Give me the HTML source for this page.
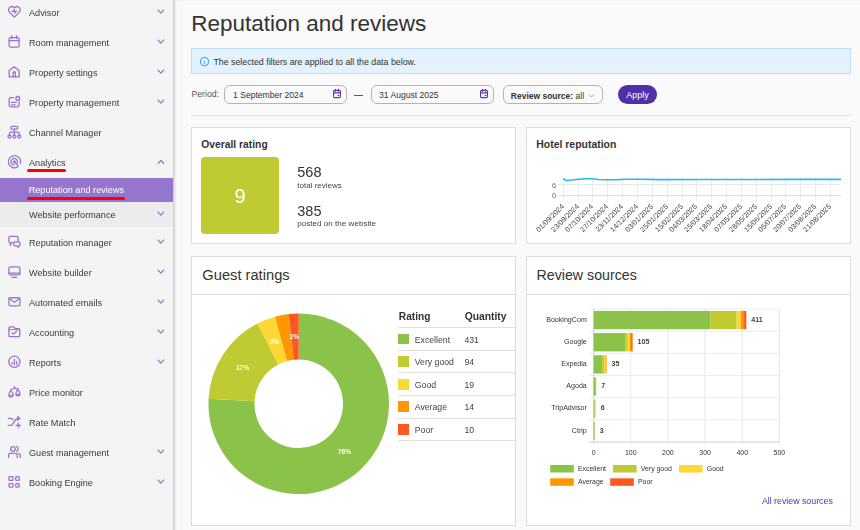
<!DOCTYPE html>
<html><head><meta charset="utf-8"><style>
html,body{margin:0;padding:0;}
body{width:860px;height:530px;overflow:hidden;position:relative;background:#fafafa;font-family:"Liberation Sans",sans-serif;}
.t{position:absolute;white-space:nowrap;line-height:1;}
.b{position:absolute;}
.ic{position:absolute;overflow:visible;}
</style></head><body>
<div style="position:absolute;left:0;top:0;width:177px;height:530px;will-change:transform;">
<div class="b" style="left:0px;top:0px;width:173px;height:530px;background:#f4f4f4;"></div>
<div class="b" style="left:173px;top:0px;width:4px;height:530px;background:linear-gradient(to right,rgba(0,0,0,0.2),rgba(0,0,0,0.08) 45%,rgba(0,0,0,0.0));"></div>
<svg class="ic" style="left:0px;top:0px;width:28px;height:30px" viewBox="0 0 28 30" fill="none" stroke="#9575cd" stroke-width="1.3" stroke-linecap="round" stroke-linejoin="round"><path d="M14.4 17.1 L9.6 12.4 C7.9 10.6 8.3 7.7 10.5 6.8 C12.1 6.1 13.6 6.8 14.4 8 C15.2 6.8 16.7 6.1 18.3 6.8 C20.5 7.7 20.9 10.6 19.2 12.4 Z"/><path d="M11.9 11.3 H13.4 L14.1 9.6 L14.9 13.2 L15.6 11.3 H16.8" stroke-width="1.2"/></svg>
<div class="t" style="left:29.00px;top:9.00px;font-size:9.15px;color:#3a3a3a;">Advisor</div>
<svg class="ic" style="left:0px;top:0px;width:173px;height:30px" viewBox="0 0 173 30" fill="none" stroke="#9575cd" stroke-width="1.3" stroke-linecap="round" stroke-linejoin="round"><path d="M158.1 10.1 L160.9 13.1 L163.6 10.1"/></svg>
<svg class="ic" style="left:0px;top:30px;width:28px;height:30px" viewBox="0 0 28 30" fill="none" stroke="#9575cd" stroke-width="1.3" stroke-linecap="round" stroke-linejoin="round"><rect x="9.15" y="7.55" width="10" height="9.6" rx="1.5"/><path d="M11.9 5.6V8.6M16.5 5.6V8.6M9.15 10.6H19.15"/></svg>
<div class="t" style="left:29.00px;top:39.00px;font-size:9.15px;color:#3a3a3a;">Room management</div>
<svg class="ic" style="left:0px;top:30px;width:173px;height:30px" viewBox="0 0 173 30" fill="none" stroke="#9575cd" stroke-width="1.3" stroke-linecap="round" stroke-linejoin="round"><path d="M158.1 10.1 L160.9 13.1 L163.6 10.1"/></svg>
<svg class="ic" style="left:0px;top:60px;width:28px;height:30px" viewBox="0 0 28 30" fill="none" stroke="#9575cd" stroke-width="1.3" stroke-linecap="round" stroke-linejoin="round"><path d="M9.15 16.85 V10.6 L14.15 6.65 L19.15 10.6 V16.85 Z"/><path d="M13.15 16.85 V12.6 Q13.15 12 13.75 12 H14.75 Q15.35 12 15.35 12.6 V16.85"/></svg>
<div class="t" style="left:29.00px;top:69.00px;font-size:9.15px;color:#3a3a3a;">Property settings</div>
<svg class="ic" style="left:0px;top:60px;width:173px;height:30px" viewBox="0 0 173 30" fill="none" stroke="#9575cd" stroke-width="1.3" stroke-linecap="round" stroke-linejoin="round"><path d="M158.1 10.1 L160.9 13.1 L163.6 10.1"/></svg>
<svg class="ic" style="left:0px;top:90px;width:28px;height:30px" viewBox="0 0 28 30" fill="none" stroke="#9575cd" stroke-width="1.3" stroke-linecap="round" stroke-linejoin="round"><path d="M13.5 7.55 H10.65 Q9.15 7.55 9.15 9.05 V15.35 Q9.15 16.85 10.65 16.85 H17.55 Q19.05 16.85 19.05 15.35 V11.8"/><circle cx="17.8" cy="8.4" r="1.9"/><path d="M11.5 12.4 H16.3M11.5 14.8 H15.1"/></svg>
<div class="t" style="left:29.00px;top:99.00px;font-size:9.15px;color:#3a3a3a;">Property management</div>
<svg class="ic" style="left:0px;top:90px;width:173px;height:30px" viewBox="0 0 173 30" fill="none" stroke="#9575cd" stroke-width="1.3" stroke-linecap="round" stroke-linejoin="round"><path d="M158.1 10.1 L160.9 13.1 L163.6 10.1"/></svg>
<svg class="ic" style="left:0px;top:120px;width:28px;height:30px" viewBox="0 0 28 30" fill="none" stroke="#9575cd" stroke-width="1.3" stroke-linecap="round" stroke-linejoin="round"><rect x="10.85" y="6.45" width="6.9" height="2.6" rx="1"/><path d="M14.3 9.05 V14.9 M9.5 15 V13.5 Q9.5 12.2 10.8 12.2 H17.9 Q19.2 12.2 19.2 13.5 V15"/><circle cx="9.5" cy="16.5" r="1.5"/><circle cx="14.35" cy="16.5" r="1.5"/><circle cx="19.2" cy="16.5" r="1.5"/></svg>
<div class="t" style="left:29.00px;top:129.00px;font-size:9.15px;color:#3a3a3a;">Channel Manager</div>
<svg class="ic" style="left:0px;top:150px;width:28px;height:30px" viewBox="0 0 28 30" fill="none" stroke="#9575cd" stroke-width="1.3" stroke-linecap="round" stroke-linejoin="round"><path d="M17.6 17 A6.1 6.1 0 1 1 20.3 13.6"/><path d="M16.9 13.3 A3.2 3.2 0 1 0 14.3 14.9"/><circle cx="14.4" cy="11.7" r="0.9"/><path d="M14.9 12.3 L18.2 16.2"/></svg>
<div class="t" style="left:29.00px;top:159.00px;font-size:9.15px;color:#3a3a3a;">Analytics</div>
<svg class="ic" style="left:0px;top:150px;width:173px;height:30px" viewBox="0 0 173 30" fill="none" stroke="#9575cd" stroke-width="1.3" stroke-linecap="round" stroke-linejoin="round"><path d="M158.3 13.3 L160.9 10.5 L163.6 13.3"/></svg>
<svg class="ic" style="left:0px;top:230px;width:28px;height:30px" viewBox="0 0 28 30" fill="none" stroke="#9575cd" stroke-width="1.3" stroke-linecap="round" stroke-linejoin="round"><path d="M12.6 12.65 H11.3 L10.5 15.5 L9.9 12.65 Q8.95 12.65 8.95 11.6 V7.5 Q8.95 6.45 10 6.45 H17 Q18.05 6.45 18.05 7.5 V11.2"/><path d="M14.9 11.85 H18.9 Q19.95 11.85 19.95 12.9 V14.8 Q19.95 15.85 18.9 15.85 L18.3 17.4 L16.9 15.85 H14.9 Q13.85 15.85 13.85 14.8 V12.9 Q13.85 11.85 14.9 11.85Z"/></svg>
<div class="t" style="left:29.00px;top:239.00px;font-size:9.15px;color:#3a3a3a;">Reputation manager</div>
<svg class="ic" style="left:0px;top:230px;width:173px;height:30px" viewBox="0 0 173 30" fill="none" stroke="#9575cd" stroke-width="1.3" stroke-linecap="round" stroke-linejoin="round"><path d="M158.1 10.1 L160.9 13.1 L163.6 10.1"/></svg>
<svg class="ic" style="left:0px;top:260px;width:28px;height:30px" viewBox="0 0 28 30" fill="none" stroke="#9575cd" stroke-width="1.3" stroke-linecap="round" stroke-linejoin="round"><rect x="8.95" y="6.85" width="11" height="8.1" rx="1.5"/><path d="M8.95 13.1 H19.95 M11.9 17.3 H16.6"/></svg>
<div class="t" style="left:29.00px;top:269.00px;font-size:9.15px;color:#3a3a3a;">Website builder</div>
<svg class="ic" style="left:0px;top:260px;width:173px;height:30px" viewBox="0 0 173 30" fill="none" stroke="#9575cd" stroke-width="1.3" stroke-linecap="round" stroke-linejoin="round"><path d="M158.1 10.1 L160.9 13.1 L163.6 10.1"/></svg>
<svg class="ic" style="left:0px;top:290px;width:28px;height:30px" viewBox="0 0 28 30" fill="none" stroke="#9575cd" stroke-width="1.3" stroke-linecap="round" stroke-linejoin="round"><rect x="8.95" y="7.75" width="11" height="8.1" rx="1.3"/><path d="M9.2 8.4 L14.45 12.3 L19.7 8.4"/></svg>
<div class="t" style="left:29.00px;top:299.00px;font-size:9.15px;color:#3a3a3a;">Automated emails</div>
<svg class="ic" style="left:0px;top:290px;width:173px;height:30px" viewBox="0 0 173 30" fill="none" stroke="#9575cd" stroke-width="1.3" stroke-linecap="round" stroke-linejoin="round"><path d="M158.1 10.1 L160.9 13.1 L163.6 10.1"/></svg>
<svg class="ic" style="left:0px;top:320px;width:28px;height:30px" viewBox="0 0 28 30" fill="none" stroke="#9575cd" stroke-width="1.3" stroke-linecap="round" stroke-linejoin="round"><path d="M10.2 6.85 H13.9 L15.1 8.6 H18.5 Q19.75 8.6 19.75 9.85 V15.4 Q19.75 16.65 18.5 16.65 H10.2 Q8.95 16.65 8.95 15.4 V8.1 Q8.95 6.85 10.2 6.85Z"/><path d="M8.95 9.6 H19.75" stroke-width="1.0"/><path d="M12.1 12.9 L13.6 14.1 L16.6 11.2"/></svg>
<div class="t" style="left:29.00px;top:329.00px;font-size:9.15px;color:#3a3a3a;">Accounting</div>
<svg class="ic" style="left:0px;top:320px;width:173px;height:30px" viewBox="0 0 173 30" fill="none" stroke="#9575cd" stroke-width="1.3" stroke-linecap="round" stroke-linejoin="round"><path d="M158.1 10.1 L160.9 13.1 L163.6 10.1"/></svg>
<svg class="ic" style="left:0px;top:350px;width:28px;height:30px" viewBox="0 0 28 30" fill="none" stroke="#9575cd" stroke-width="1.3" stroke-linecap="round" stroke-linejoin="round"><circle cx="14.4" cy="11.8" r="5.6"/><path d="M12.1 12.7 V14.2 M14.4 9.2 V14.4 M16.6 11.4 V14.2"/></svg>
<div class="t" style="left:29.00px;top:359.00px;font-size:9.15px;color:#3a3a3a;">Reports</div>
<svg class="ic" style="left:0px;top:350px;width:173px;height:30px" viewBox="0 0 173 30" fill="none" stroke="#9575cd" stroke-width="1.3" stroke-linecap="round" stroke-linejoin="round"><path d="M158.1 10.1 L160.9 13.1 L163.6 10.1"/></svg>
<svg class="ic" style="left:0px;top:380px;width:28px;height:30px" viewBox="0 0 28 30" fill="none" stroke="#9575cd" stroke-width="1.3" stroke-linecap="round" stroke-linejoin="round"><path d="M14.4 6.4 V7.9 M10.6 9.8 Q14.4 7.6 18 8.8"/><path d="M10.9 10.7 C9.5 12.2 8.8 13.5 8.8 14.9 A2.15 2.15 0 0 0 13.1 14.9 C13.1 13.5 12.3 12.2 10.9 10.7Z M9 15.5 H12.9" stroke-width="1.2"/><path d="M17.95 9.5 C16.6 11 15.8 12.3 15.8 13.7 A2.15 2.15 0 0 0 20.1 13.7 C20.1 12.3 19.3 11 17.95 9.5Z M16 14.4 H19.9" stroke-width="1.2"/></svg>
<div class="t" style="left:29.00px;top:389.00px;font-size:9.15px;color:#3a3a3a;">Price monitor</div>
<svg class="ic" style="left:0px;top:410px;width:28px;height:30px" viewBox="0 0 28 30" fill="none" stroke="#9575cd" stroke-width="1.3" stroke-linecap="round" stroke-linejoin="round"><path d="M8.4 8.4 H10.9 Q12.2 8.4 12.9 9.6 M8.4 15.4 H11.6 L16.1 9.2 Q16.8 8.3 18 8.3 H19.5 M17.6 6.5 L19.7 8.3 L17.6 10.2 M18.3 13.2 V17.6 M16.1 15.4 H20.5"/></svg>
<div class="t" style="left:29.00px;top:419.00px;font-size:9.15px;color:#3a3a3a;">Rate Match</div>
<svg class="ic" style="left:0px;top:440px;width:28px;height:30px" viewBox="0 0 28 30" fill="none" stroke="#9575cd" stroke-width="1.3" stroke-linecap="round" stroke-linejoin="round"><circle cx="12.9" cy="9" r="2.3"/><path d="M16.6 6.6 A2.6 2.6 0 0 1 16.6 11.4 M8.6 17.4 V14.9 Q8.6 13.3 10.3 13.3 H15.6 Q17.2 13.3 17.2 14.9 V17.4 M18.6 13.4 Q20.3 13.9 20.3 15.6 V17.4"/></svg>
<div class="t" style="left:29.00px;top:449.00px;font-size:9.15px;color:#3a3a3a;">Guest management</div>
<svg class="ic" style="left:0px;top:440px;width:173px;height:30px" viewBox="0 0 173 30" fill="none" stroke="#9575cd" stroke-width="1.3" stroke-linecap="round" stroke-linejoin="round"><path d="M158.1 10.1 L160.9 13.1 L163.6 10.1"/></svg>
<svg class="ic" style="left:0px;top:470px;width:28px;height:30px" viewBox="0 0 28 30" fill="none" stroke="#9575cd" stroke-width="1.3" stroke-linecap="round" stroke-linejoin="round"><rect x="8.95" y="6.65" width="4.1" height="3.8" rx="0.8"/><rect x="15.75" y="6.65" width="3.45" height="3.8" rx="0.8"/><rect x="8.95" y="13.65" width="4.1" height="3.4" rx="0.8"/><rect x="15.75" y="13.65" width="3.45" height="3.4" rx="0.8"/></svg>
<div class="t" style="left:29.00px;top:479.00px;font-size:9.15px;color:#3a3a3a;">Booking Engine</div>
<svg class="ic" style="left:0px;top:470px;width:173px;height:30px" viewBox="0 0 173 30" fill="none" stroke="#9575cd" stroke-width="1.3" stroke-linecap="round" stroke-linejoin="round"><path d="M158.1 10.1 L160.9 13.1 L163.6 10.1"/></svg>
<div class="b" style="left:0px;top:178px;width:173px;height:24px;background:#9575cd;"></div>
<div class="t" style="left:28.70px;top:186.00px;font-size:9.15px;color:#fff;">Reputation and reviews</div>
<div class="b" style="left:0px;top:202px;width:173px;height:25px;background:#ececec;"></div>
<div class="t" style="left:29.00px;top:211.00px;font-size:9.15px;color:#3a3a3a;">Website performance</div>
<svg class="ic" style="left:0px;top:202px;width:173px;height:30px" viewBox="0 0 173 30" fill="none" stroke="#9575cd" stroke-width="1.3" stroke-linecap="round" stroke-linejoin="round"><path d="M158.1 10.1 L160.9 13.1 L163.6 10.1"/></svg>
<div class="b" style="left:27px;top:169px;width:39px;height:3px;background:#f00;border-radius:2px;"></div>
<div class="b" style="left:27px;top:197px;width:98px;height:3px;background:#f00;border-radius:2px;"></div>
</div>
<div class="b" style="left:177px;top:0px;width:683px;height:1px;background:#f3f3f3;"></div>
<div class="b" style="left:177px;top:1px;width:683px;height:1px;background:#f8f8f8;"></div>
<div class="t" style="left:191.20px;top:13.00px;font-size:22.5px;color:#333;">Reputation and reviews</div>
<div class="b" style="left:191px;top:48px;width:660px;height:26px;background:#e3f2fd;border:1px solid #bbdefb;box-sizing:border-box;"></div>
<svg class="ic" style="left:199px;top:56.2px;width:11px;height:11px" viewBox="0 0 11 11" fill="none" stroke="#42a5f5" stroke-width="1.1"><circle cx="5.5" cy="5.6" r="4.1"/><path d="M5.5 5.2v2.4" stroke-width="1.2"/><path d="M5.5 3.6v.2" stroke-width="0.9" opacity="0.5"/></svg>
<div class="t" style="left:213.40px;top:58.00px;font-size:8.8px;color:#333;">The selected filters are applied to all the data below.</div>
<div class="t" style="left:191.60px;top:90.00px;font-size:8.6px;color:#555;">Period:</div>
<div class="b" style="left:224px;top:85px;width:123px;height:19px;background:transparent;border:1px solid #b4b4b4;border-radius:6px;box-sizing:border-box;"></div>
<div class="t" style="left:232.80px;top:90.00px;font-size:9.4px;color:#333;transform:scaleX(0.915);transform-origin:0 0;">1 September 2024</div>
<svg class="ic" style="left:333px;top:88px;width:10px;height:12px" viewBox="0 0 10 12" fill="none" stroke="#5e35b1" stroke-width="1.1" stroke-linecap="round" stroke-linejoin="round"><rect x="0.55" y="2.35" width="6.9" height="7.3" rx="1.2"/><path d="M2.5 1.4V3.2M5.6 1.4V3.2M0.8 4.9H7.2"/><path d="M5.2 7.3h.6" stroke-width="1.3"/></svg>
<div class="b" style="left:354px;top:94.5px;width:9px;height:1.2000000000000028px;background:#5a5a5a;"></div>
<div class="b" style="left:371px;top:85px;width:123px;height:19px;background:transparent;border:1px solid #b4b4b4;border-radius:6px;box-sizing:border-box;"></div>
<div class="t" style="left:379.00px;top:90.00px;font-size:9.4px;color:#333;transform:scaleX(0.915);transform-origin:0 0;">31 August 2025</div>
<svg class="ic" style="left:480px;top:88px;width:10px;height:12px" viewBox="0 0 10 12" fill="none" stroke="#5e35b1" stroke-width="1.1" stroke-linecap="round" stroke-linejoin="round"><rect x="0.55" y="2.35" width="6.9" height="7.3" rx="1.2"/><path d="M2.5 1.4V3.2M5.6 1.4V3.2M0.8 4.9H7.2"/><path d="M5.2 7.3h.6" stroke-width="1.3"/></svg>
<div class="b" style="left:503px;top:85px;width:100px;height:19px;background:transparent;border:1px solid #b4b4b4;border-radius:6px;box-sizing:border-box;"></div>
<div class="t" style="left:510.80px;top:92.00px;font-size:8.5px;color:#333;"><b>Review source:</b> all</div>
<svg class="ic" style="left:587.5px;top:93.5px;width:7px;height:4px" viewBox="0 0 7 4" fill="none" stroke="#888" stroke-width="0.8"><path d="M1 .5l2.5 2.5 2.5-2.5"/></svg>
<div class="b" style="left:618px;top:85px;width:39px;height:19px;background:#5030a8;border-radius:10px;"></div>
<div class="t" style="left:537.50px;width:200px;text-align:center;top:91.00px;font-size:9px;color:#fff;">Apply</div>
<div class="b" style="left:191px;top:115px;width:660px;height:1px;background:#ddd;"></div>
<div class="b" style="left:191px;top:127px;width:325px;height:117px;background:#fff;border:1px solid #ddd;box-sizing:border-box;"></div>
<div class="b" style="left:526px;top:127px;width:325px;height:117px;background:#fff;border:1px solid #ddd;box-sizing:border-box;"></div>
<div class="b" style="left:191px;top:256px;width:325px;height:270px;background:#fff;border:1px solid #ddd;box-sizing:border-box;"></div>
<div class="b" style="left:526px;top:256px;width:325px;height:270px;background:#fff;border:1px solid #ddd;box-sizing:border-box;"></div>
<div class="t" style="left:201.30px;top:140.00px;font-size:10.3px;color:#333;font-weight:700;">Overall rating</div>
<div class="b" style="left:201px;top:157px;width:78px;height:77px;background:#c0ca33;border-radius:4px;"></div>
<div class="t" style="left:140.00px;width:200px;text-align:center;top:186.00px;font-size:20px;color:#fff;">9</div>
<div class="t" style="left:297.30px;top:165.00px;font-size:14.5px;color:#333;">568</div>
<div class="t" style="left:297.30px;top:182.00px;font-size:8px;color:#444;">total reviews</div>
<div class="t" style="left:297.30px;top:204.00px;font-size:14.5px;color:#333;">385</div>
<div class="t" style="left:297.30px;top:220.00px;font-size:8.1px;color:#444;">posted on the website</div>
<div class="t" style="left:536.30px;top:140.00px;font-size:10.45px;color:#333;font-weight:700;">Hotel reputation</div>
<div class="t" style="left:202.30px;top:268.00px;font-size:14.7px;color:#333;">Guest ratings</div>
<div class="b" style="left:192px;top:294px;width:323px;height:1px;background:#ddd;"></div>
<div class="t" style="left:536.60px;top:268.00px;font-size:14.2px;color:#333;">Review sources</div>
<div class="b" style="left:527px;top:294px;width:323px;height:1px;background:#ddd;"></div>
<svg class="ic" style="left:0;top:0;width:860px;height:530px;will-change:transform" viewBox="0 0 860 530" font-family="Liberation Sans"><line x1="563.50" y1="178" x2="563.50" y2="201" stroke="#ebebeb" stroke-width="1"/><line x1="578.50" y1="178" x2="578.50" y2="201" stroke="#ebebeb" stroke-width="1"/><line x1="592.50" y1="178" x2="592.50" y2="201" stroke="#ebebeb" stroke-width="1"/><line x1="607.50" y1="178" x2="607.50" y2="201" stroke="#ebebeb" stroke-width="1"/><line x1="622.50" y1="178" x2="622.50" y2="201" stroke="#ebebeb" stroke-width="1"/><line x1="637.50" y1="178" x2="637.50" y2="201" stroke="#ebebeb" stroke-width="1"/><line x1="652.50" y1="178" x2="652.50" y2="201" stroke="#ebebeb" stroke-width="1"/><line x1="667.50" y1="178" x2="667.50" y2="201" stroke="#ebebeb" stroke-width="1"/><line x1="682.50" y1="178" x2="682.50" y2="201" stroke="#ebebeb" stroke-width="1"/><line x1="696.50" y1="178" x2="696.50" y2="201" stroke="#ebebeb" stroke-width="1"/><line x1="711.50" y1="178" x2="711.50" y2="201" stroke="#ebebeb" stroke-width="1"/><line x1="726.50" y1="178" x2="726.50" y2="201" stroke="#ebebeb" stroke-width="1"/><line x1="741.50" y1="178" x2="741.50" y2="201" stroke="#ebebeb" stroke-width="1"/><line x1="756.50" y1="178" x2="756.50" y2="201" stroke="#ebebeb" stroke-width="1"/><line x1="771.50" y1="178" x2="771.50" y2="201" stroke="#ebebeb" stroke-width="1"/><line x1="785.50" y1="178" x2="785.50" y2="201" stroke="#ebebeb" stroke-width="1"/><line x1="800.50" y1="178" x2="800.50" y2="201" stroke="#ebebeb" stroke-width="1"/><line x1="815.50" y1="178" x2="815.50" y2="201" stroke="#ebebeb" stroke-width="1"/><line x1="830.50" y1="178" x2="830.50" y2="201" stroke="#ebebeb" stroke-width="1"/><line x1="558" y1="184.5" x2="841" y2="184.5" stroke="#e8e8e8" stroke-width="1"/><line x1="558" y1="195.5" x2="841" y2="195.5" stroke="#dedede" stroke-width="1"/><polyline fill="none" stroke="#29b6f6" stroke-width="1.6" stroke-linejoin="round" points="563.3,178.3 565.8,180.5 571.6,180 578.6,179.2 585.6,178.7 592.6,178.7 598.4,179.5 606.5,179.8 615.8,179.8 625,179.3 641.4,179.3 660,179.6 700,179.5 760,179.5 800,179.4 841,179.4"/><text x="556.2" y="187.6" font-size="7.4" fill="#666" text-anchor="end">6</text><text x="556.2" y="198.4" font-size="7.4" fill="#666" text-anchor="end">0</text><text transform="translate(564.50,207) rotate(-45)" font-size="7.2" fill="#444" text-anchor="end">01/09/2024</text><text transform="translate(579.50,207) rotate(-45)" font-size="7.2" fill="#444" text-anchor="end">23/09/2024</text><text transform="translate(593.50,207) rotate(-45)" font-size="7.2" fill="#444" text-anchor="end">07/10/2024</text><text transform="translate(608.50,207) rotate(-45)" font-size="7.2" fill="#444" text-anchor="end">27/10/2024</text><text transform="translate(623.50,207) rotate(-45)" font-size="7.2" fill="#444" text-anchor="end">23/11/2024</text><text transform="translate(638.50,207) rotate(-45)" font-size="7.2" fill="#444" text-anchor="end">14/12/2024</text><text transform="translate(653.50,207) rotate(-45)" font-size="7.2" fill="#444" text-anchor="end">03/01/2025</text><text transform="translate(668.50,207) rotate(-45)" font-size="7.2" fill="#444" text-anchor="end">25/01/2025</text><text transform="translate(683.50,207) rotate(-45)" font-size="7.2" fill="#444" text-anchor="end">15/02/2025</text><text transform="translate(697.50,207) rotate(-45)" font-size="7.2" fill="#444" text-anchor="end">04/03/2025</text><text transform="translate(712.50,207) rotate(-45)" font-size="7.2" fill="#444" text-anchor="end">25/03/2025</text><text transform="translate(727.50,207) rotate(-45)" font-size="7.2" fill="#444" text-anchor="end">18/04/2025</text><text transform="translate(742.50,207) rotate(-45)" font-size="7.2" fill="#444" text-anchor="end">07/05/2025</text><text transform="translate(757.50,207) rotate(-45)" font-size="7.2" fill="#444" text-anchor="end">28/05/2025</text><text transform="translate(772.50,207) rotate(-45)" font-size="7.2" fill="#444" text-anchor="end">15/06/2025</text><text transform="translate(786.50,207) rotate(-45)" font-size="7.2" fill="#444" text-anchor="end">05/07/2025</text><text transform="translate(801.50,207) rotate(-45)" font-size="7.2" fill="#444" text-anchor="end">20/07/2025</text><text transform="translate(816.50,207) rotate(-45)" font-size="7.2" fill="#444" text-anchor="end">03/08/2025</text><text transform="translate(831.50,207) rotate(-45)" font-size="7.2" fill="#444" text-anchor="end">21/08/2025</text></svg>
<svg class="ic" style="left:0;top:0;width:860px;height:530px;will-change:transform" viewBox="0 0 860 530" font-family="Liberation Sans"><path d="M298.70 313.50 A90.3 90.3 0 1 1 208.54 398.81 L254.47 401.35 A44.3 44.3 0 1 0 298.70 359.50Z" fill="#8bc34a"/><path d="M208.54 398.81 A90.3 90.3 0 0 1 257.35 323.52 L278.41 364.42 A44.3 44.3 0 0 0 254.47 401.35Z" fill="#c0ca33"/><path d="M257.35 323.52 A90.3 90.3 0 0 1 275.01 316.66 L287.08 361.05 A44.3 44.3 0 0 0 278.41 364.42Z" fill="#fdd835"/><path d="M275.01 316.66 A90.3 90.3 0 0 1 288.73 314.05 L293.81 359.77 A44.3 44.3 0 0 0 287.08 361.05Z" fill="#ff9800"/><path d="M288.73 314.05 A90.3 90.3 0 0 1 298.70 313.50 L298.70 359.50 A44.3 44.3 0 0 0 293.81 359.77Z" fill="#ff5722"/><text x="344.5" y="454.3" font-size="6.7" font-weight="700" fill="#fff" text-anchor="middle">76%</text><text x="242.6" y="369.6" font-size="6.7" font-weight="700" fill="#fff" text-anchor="middle">17%</text><text x="274.3" y="343.9" font-size="6.7" font-weight="700" fill="#fff" text-anchor="middle">3%</text><text x="294.3" y="338.6" font-size="6.7" font-weight="700" fill="#fff" text-anchor="middle">2%</text></svg>
<div class="t" style="left:398.80px;top:312.00px;font-size:10.2px;color:#333;font-weight:700;">Rating</div>
<div class="t" style="left:464.70px;top:312.00px;font-size:10.3px;color:#333;font-weight:700;">Quantity</div>
<div class="b" style="left:398px;top:327px;width:117px;height:1px;background:#e0e0e0;"></div>
<div class="b" style="left:398px;top:350px;width:117px;height:1px;background:#e0e0e0;"></div>
<div class="b" style="left:398px;top:372px;width:117px;height:1px;background:#e0e0e0;"></div>
<div class="b" style="left:398px;top:395px;width:117px;height:1px;background:#e0e0e0;"></div>
<div class="b" style="left:398px;top:418px;width:117px;height:1px;background:#e0e0e0;"></div>
<div class="b" style="left:398px;top:440px;width:117px;height:1px;background:#e0e0e0;"></div>
<div class="b" style="left:398px;top:334px;width:11px;height:10px;background:#8bc34a;"></div>
<div class="t" style="left:414.80px;top:336.00px;font-size:8.7px;color:#444;">Excellent</div>
<div class="t" style="left:464.40px;top:336.00px;font-size:8.7px;color:#444;">431</div>
<div class="b" style="left:398px;top:356px;width:11px;height:11px;background:#c0ca33;"></div>
<div class="t" style="left:414.80px;top:358.00px;font-size:8.7px;color:#444;">Very good</div>
<div class="t" style="left:464.40px;top:358.00px;font-size:8.7px;color:#444;">94</div>
<div class="b" style="left:398px;top:379px;width:11px;height:11px;background:#fdd835;"></div>
<div class="t" style="left:414.80px;top:381.00px;font-size:8.7px;color:#444;">Good</div>
<div class="t" style="left:464.40px;top:381.00px;font-size:8.7px;color:#444;">19</div>
<div class="b" style="left:398px;top:401px;width:11px;height:11px;background:#ff9800;"></div>
<div class="t" style="left:414.80px;top:403.00px;font-size:8.7px;color:#444;">Average</div>
<div class="t" style="left:464.40px;top:403.00px;font-size:8.7px;color:#444;">14</div>
<div class="b" style="left:398px;top:424px;width:11px;height:11px;background:#ff5722;"></div>
<div class="t" style="left:414.80px;top:426.00px;font-size:8.7px;color:#444;">Poor</div>
<div class="t" style="left:464.40px;top:426.00px;font-size:8.7px;color:#444;">10</div>
<svg class="ic" style="left:0;top:0;width:860px;height:530px;will-change:transform" viewBox="0 0 860 530" font-family="Liberation Sans"><line x1="630.76" y1="309" x2="630.76" y2="444" stroke="#e6e6e6" stroke-width="1"/><line x1="667.92" y1="309" x2="667.92" y2="444" stroke="#e6e6e6" stroke-width="1"/><line x1="705.08" y1="309" x2="705.08" y2="444" stroke="#e6e6e6" stroke-width="1"/><line x1="742.24" y1="309" x2="742.24" y2="444" stroke="#e6e6e6" stroke-width="1"/><line x1="779.40" y1="309" x2="779.40" y2="444" stroke="#e6e6e6" stroke-width="1"/><line x1="589" y1="309.00" x2="779.4" y2="309.00" stroke="#ebebeb" stroke-width="1"/><line x1="589" y1="331.17" x2="779.4" y2="331.17" stroke="#ebebeb" stroke-width="1"/><line x1="589" y1="353.33" x2="779.4" y2="353.33" stroke="#ebebeb" stroke-width="1"/><line x1="589" y1="375.50" x2="779.4" y2="375.50" stroke="#ebebeb" stroke-width="1"/><line x1="589" y1="397.67" x2="779.4" y2="397.67" stroke="#ebebeb" stroke-width="1"/><line x1="589" y1="419.83" x2="779.4" y2="419.83" stroke="#ebebeb" stroke-width="1"/><line x1="589" y1="442.00" x2="779.4" y2="442.00" stroke="#ebebeb" stroke-width="1"/><line x1="593.6" y1="309" x2="593.6" y2="444" stroke="#d8d8d8" stroke-width="1"/><line x1="589" y1="442" x2="779.4" y2="442" stroke="#d8d8d8" stroke-width="1"/><rect x="593.60" y="310.90" width="116.68" height="18.3" fill="#8bc34a"/><rect x="710.28" y="310.90" width="26.38" height="18.3" fill="#c0ca33"/><rect x="736.67" y="310.90" width="4.09" height="18.3" fill="#fdd835"/><rect x="740.75" y="310.90" width="3.34" height="18.3" fill="#ff9800"/><rect x="744.10" y="310.90" width="2.23" height="18.3" fill="#ff5722"/><text x="586.8" y="321.80" font-size="7.1" fill="#333" text-anchor="end">BookingCom</text><text x="751.33" y="321.80" font-size="7.1" font-weight="700" fill="#444">411</text><rect x="593.60" y="333.07" width="31.59" height="18.3" fill="#8bc34a"/><rect x="625.19" y="333.07" width="2.60" height="18.3" fill="#c0ca33"/><rect x="627.79" y="333.07" width="1.86" height="18.3" fill="#fdd835"/><rect x="629.65" y="333.07" width="1.49" height="18.3" fill="#ff9800"/><rect x="631.13" y="333.07" width="1.49" height="18.3" fill="#ff5722"/><text x="586.8" y="343.97" font-size="7.1" fill="#333" text-anchor="end">Google</text><text x="637.62" y="343.97" font-size="7.1" font-weight="700" fill="#444">105</text><rect x="593.60" y="355.23" width="8.55" height="18.3" fill="#8bc34a"/><rect x="602.15" y="355.23" width="1.86" height="18.3" fill="#c0ca33"/><rect x="604.00" y="355.23" width="1.49" height="18.3" fill="#fdd835"/><rect x="605.49" y="355.23" width="1.11" height="18.3" fill="#ff9800"/><text x="586.8" y="366.13" font-size="7.1" fill="#333" text-anchor="end">Expedia</text><text x="611.61" y="366.13" font-size="7.1" font-weight="700" fill="#444">35</text><rect x="593.60" y="377.40" width="2.23" height="18.3" fill="#8bc34a"/><rect x="595.83" y="377.40" width="0.37" height="18.3" fill="#c0ca33"/><text x="586.8" y="388.30" font-size="7.1" fill="#333" text-anchor="end">Agoda</text><text x="601.20" y="388.30" font-size="7.1" font-weight="700" fill="#444">7</text><rect x="593.60" y="399.57" width="1.11" height="18.3" fill="#8bc34a"/><rect x="594.71" y="399.57" width="1.11" height="18.3" fill="#fdd835"/><text x="586.8" y="410.47" font-size="7.1" fill="#333" text-anchor="end">TripAdvisor</text><text x="600.83" y="410.47" font-size="7.1" font-weight="700" fill="#444">6</text><rect x="593.60" y="421.73" width="1.11" height="18.3" fill="#8bc34a"/><text x="586.8" y="432.63" font-size="7.1" fill="#333" text-anchor="end">Ctrip</text><text x="599.71" y="432.63" font-size="7.1" font-weight="700" fill="#444">3</text><text x="593.60" y="454.8" font-size="7" fill="#333" text-anchor="middle">0</text><text x="630.76" y="454.8" font-size="7" fill="#333" text-anchor="middle">100</text><text x="667.92" y="454.8" font-size="7" fill="#333" text-anchor="middle">200</text><text x="705.08" y="454.8" font-size="7" fill="#333" text-anchor="middle">300</text><text x="742.24" y="454.8" font-size="7" fill="#333" text-anchor="middle">400</text><text x="779.40" y="454.8" font-size="7" fill="#333" text-anchor="middle">500</text><rect x="550.2" y="465" width="23.6" height="7.5" fill="#8bc34a"/><text x="578.0" y="470.8" font-size="6.9" fill="#333">Excellent</text><rect x="613" y="465" width="23.6" height="7.5" fill="#c0ca33"/><text x="640.8" y="470.8" font-size="6.9" fill="#333">Very good</text><rect x="679" y="465" width="23.6" height="7.5" fill="#fdd835"/><text x="706.8" y="470.8" font-size="6.9" fill="#333">Good</text><rect x="550.2" y="478.3" width="23.6" height="7.5" fill="#ff9800"/><text x="578.0" y="484.1" font-size="6.9" fill="#333">Average</text><rect x="610.2" y="478.3" width="23.6" height="7.5" fill="#ff5722"/><text x="638.0" y="484.1" font-size="6.9" fill="#333">Poor</text></svg>
<div class="t" style="left:761.90px;top:497.00px;font-size:8.8px;color:#5030a8;">All review sources</div>
</body></html>
